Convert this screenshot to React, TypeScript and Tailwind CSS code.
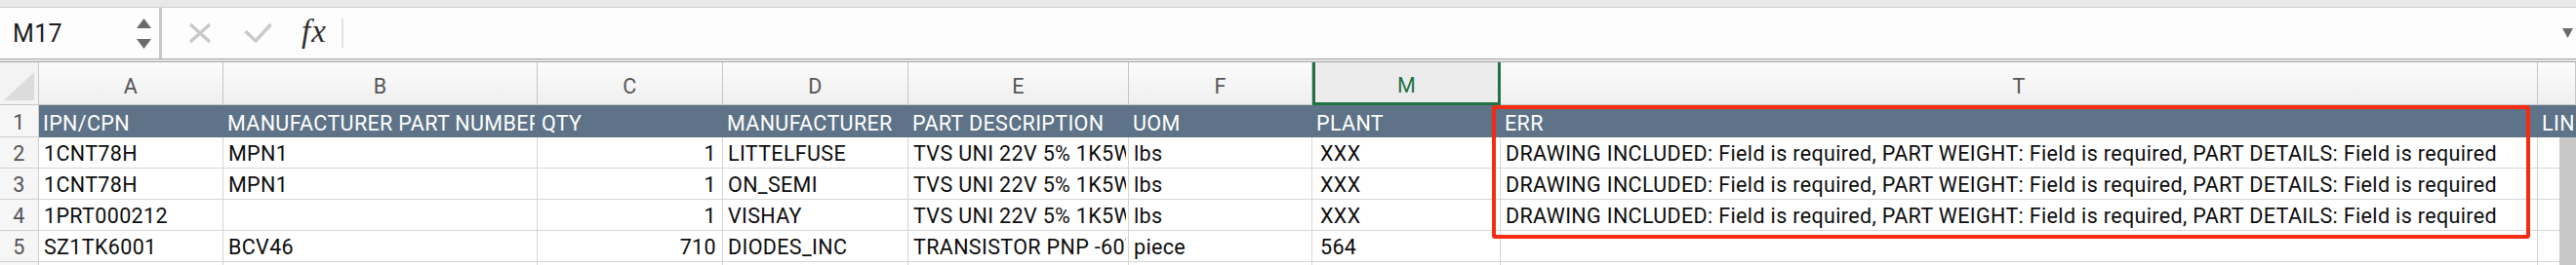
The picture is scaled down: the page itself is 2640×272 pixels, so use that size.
import React from 'react';

type Col = { letter: string; w: number; right?: boolean };

const COLS: Col[] = [
  { letter: 'A', w: 189 },
  { letter: 'B', w: 322 },
  { letter: 'C', w: 190, right: true },
  { letter: 'D', w: 190 },
  { letter: 'E', w: 226 },
  { letter: 'F', w: 188 },
  { letter: 'M', w: 193 },
  { letter: 'T', w: 1063 },
  { letter: '', w: 39 },
];

const HEADERS = [
  'IPN/CPN',
  'MANUFACTURER PART NUMBER',
  'QTY',
  'MANUFACTURER',
  'PART DESCRIPTION',
  'UOM',
  'PLANT',
  'ERR',
  'LINE ITEM',
];

const ERR = 'DRAWING INCLUDED: Field is required, PART WEIGHT: Field is required, PART DETAILS: Field is required';
const TVS = 'TVS UNI 22V 5% 1K5W SMC';

const ROWS: string[][] = [
  ['1CNT78H', 'MPN1', '1', 'LITTELFUSE', TVS, 'lbs', 'XXX', ERR, ''],
  ['1CNT78H', 'MPN1', '1', 'ON_SEMI', TVS, 'lbs', 'XXX', ERR, ''],
  ['1PRT000212', '', '1', 'VISHAY', TVS, 'lbs', 'XXX', ERR, ''],
  ['SZ1TK6001', 'BCV46', '710', 'DIODES_INC', 'TRANSISTOR PNP -60V 0.5A', 'piece', '564', '', ''],
  ['', '', '', '', '', '', '', '', ''],
];

const gridCols = 'grid grid-cols-[40px_189px_322px_190px_190px_226px_188px_193px_1063px_39px]';

const FormulaBar: React.FC = () => (
  <div className="flex h-[52px] items-stretch bg-[#fdfdfd]">
    <div className="flex w-[166px] items-center border-r-[3px] border-[#c8c8c8] pl-[13px]">
      <span className="text-[25px] leading-none text-[#1d1d1d]">M17</span>
      <div className="ml-auto mr-[8px] flex flex-col gap-[11px]">
        <svg width="15" height="10" viewBox="0 0 15 10">
          <path d="M7.5 0 L15 10 L0 10 Z" fill="#6b6b6b" />
        </svg>
        <svg width="15" height="10" viewBox="0 0 15 10">
          <path d="M0 0 L15 0 L7.5 10 Z" fill="#6b6b6b" />
        </svg>
      </div>
    </div>
    <div className="ml-[27px] flex items-center">
      <svg width="24" height="22" viewBox="0 0 24 22">
        <path d="M2 2 L22 20 M22 2 L2 20" stroke="#c9c9c9" strokeWidth="3.2" fill="none" />
      </svg>
    </div>
    <div className="ml-[33px] flex items-center">
      <svg width="29" height="22" viewBox="0 0 29 22">
        <path d="M1.5 9 L12 19 L27.5 2" stroke="#c9c9c9" strokeWidth="3.4" fill="none" />
      </svg>
    </div>
    <div className="ml-[30px] flex items-center pb-[3px]">
      <span className="font-[family-name:'Liberation_Serif',serif] text-[33px] italic leading-none tracking-[1px] text-[#2f2f2f]">
        fx
      </span>
    </div>
    <div className="ml-[15px] my-[11px] w-[2px] bg-[#e2e2e2]" />
    <div className="flex flex-1 items-center justify-end pr-[3px]">
      <svg width="11" height="10" viewBox="0 0 11 10">
        <path d="M0 0 L11 0 L5.5 10 Z" fill="#6b6b6b" />
      </svg>
    </div>
  </div>
);

const ColumnHeaders: React.FC = () => (
  <div className={`${gridCols} h-[44px]`}>
    <div className="flex items-end justify-end border-r border-b border-[#c8c8c8] bg-[#f3f3f3] pr-[4px] pb-[4px]">
      <svg width="31" height="29" viewBox="0 0 31 29">
        <path d="M31 0 L31 29 L0 29 Z" fill="#dcdcdc" />
      </svg>
    </div>
    {COLS.map((c, i) =>
      c.letter === 'M' ? (
        <div
          key={i}
          className="flex items-center justify-center border-x-[3px] border-b-[3px] border-[#217346] bg-[#ececec] pt-[8px] text-[21.5px] text-[#217346]"
        >
          {c.letter}
        </div>
      ) : (
        <div
          key={i}
          className="flex items-center justify-center border-r border-b border-[#c6c6c6] bg-linear-to-b from-[#fcfcfc] to-[#efefef] pt-[8px] text-[21.5px] text-[#555555]"
        >
          {c.letter}
        </div>
      ),
    )}
  </div>
);

const HeaderRow: React.FC = () => (
  <div className={`${gridCols} h-[33px]`}>
    <div className="border-r border-b border-[#cfcfcf] bg-[#f6f6f6] pt-[5px] text-center leading-[26px] text-[#555555]">1</div>
    {HEADERS.map((h, i) => (
      <div key={i} className="min-w-0 bg-[#5e7387] pl-[4px] pt-[6px]">
        <div className="mr-[3px] overflow-hidden whitespace-nowrap leading-[26px] text-white">{h}</div>
      </div>
    ))}
  </div>
);

const DataRow: React.FC<{ n: number; cells: string[] }> = ({ n, cells }) => (
  <div className={`${gridCols} h-[32px]`}>
    <div className="border-r border-b border-[#cfcfcf] bg-[#f6f6f6] pt-[4px] text-center leading-[26px] text-[#555555]">
      {n}
    </div>
    {cells.map((v, i) => (
      <div
        key={i}
        className={`min-w-0 border-r border-b border-[#d6d6d6] pt-[4px] ${
          COLS[i].right ? 'pr-[6px]' : i === 6 ? 'pl-[8px]' : 'pl-[5px]'
        }`}
      >
        <div
          className={`overflow-hidden whitespace-nowrap leading-[26px] text-[#0d0d0d] ${
            COLS[i].right ? 'text-right' : 'mr-[2px]'
          }`}
        >
          {v}
        </div>
      </div>
    ))}
  </div>
);

export default function App() {
  return (
    <div className="relative h-[272px] w-[2640px] overflow-hidden bg-white font-[family-name:Roboto,sans-serif] text-[21.5px] tracking-[0.35px]">
      <div className="h-[8px] border-b border-[#cfcfcf] bg-[#e8e8e8]" />
      <FormulaBar />
      <div className="h-[4px] border-y border-[#a9a9a9] bg-[#e4e4e4]" />
      <ColumnHeaders />
      <HeaderRow />
      {ROWS.map((r, i) => (
        <DataRow key={i} n={i + 2} cells={r} />
      ))}

      {/* error column highlight */}
      <div className="pointer-events-none absolute left-[1529px] top-[108px] h-[137px] w-[1064px] rounded-[3px] border-[4px] border-[#f52c14]" />
      {/* vertical scrollbar overlay */}
      <div className="absolute bottom-0 left-[2623px] top-[141px] w-[17px] bg-[#c8c8c8]" />
    </div>
  );
}
